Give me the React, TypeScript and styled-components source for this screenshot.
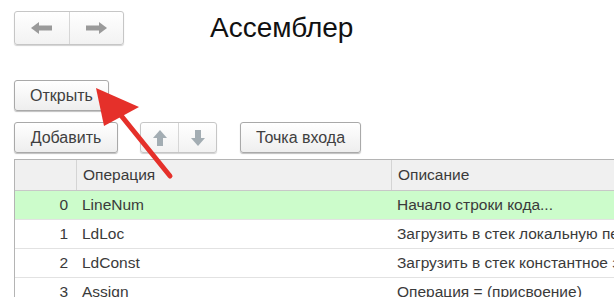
import styled, { createGlobalStyle } from "styled-components";

const GlobalStyle = createGlobalStyle`
    html, body {
        margin: 0;
        padding: 0;
        background: #ffffff;
    }
    body {
        font-family: "Liberation Sans", Arial, sans-serif;
        color: #3c3c3c;
    }
`;

const Page = styled.div`
    position: relative;
    width: 614px;
    height: 297px;
    overflow: hidden;
    padding: 11px 0 0 14px;
    box-sizing: border-box;
`;

const TopBar = styled.div`
    display: flex;
    align-items: center;
    height: 34px;
`;

const ButtonGroup = styled.div<{ $width: number; $height?: number; $gap?: number }>`
    display: flex;
    width: ${(p) => p.$width}px;
    height: ${(p) => p.$height ?? 31}px;
    margin-left: ${(p) => p.$gap ?? 0}px;
    box-sizing: border-box;
    border: 1px solid #c6c6c6;
    border-radius: 3px;
    background: linear-gradient(#ffffff, #f2f2f2);
    box-shadow: 0 1px 1px rgba(0, 0, 0, 0.18);
    flex-shrink: 0;
`;

const GroupCell = styled.div`
    flex: 1;
    display: flex;
    align-items: center;
    justify-content: center;
    & + & {
        border-left: 1px solid #d6d6d6;
    }
`;

const Title = styled.h1`
    margin: 0 0 0 86px;
    font-size: 28px;
    font-weight: normal;
    color: #111111;
`;

const Row = styled.div<{ $top: number }>`
    display: flex;
    align-items: center;
    margin-top: ${(p) => p.$top}px;
`;

const Button = styled.button<{ $width: number; $gap?: number }>`
    width: ${(p) => p.$width}px;
    height: 31px;
    margin-left: ${(p) => p.$gap ?? 0}px;
    padding: 0;
    box-sizing: border-box;
    border: 1px solid #a9a9a9;
    border-radius: 3px;
    background: linear-gradient(#ffffff, #eeeeee);
    box-shadow: 0 1px 1px rgba(0, 0, 0, 0.25);
    font-family: "Liberation Sans", Arial, sans-serif;
    font-size: 16px;
    color: #404040;
    flex-shrink: 0;
`;

const Table = styled.div`
    margin-top: 6px;
    width: 720px;
    border-top: 1px solid #b4b4b4;
    border-left: 1px solid #b4b4b4;
`;

const TableRow = styled.div<{ $head?: boolean; $active?: boolean }>`
    display: grid;
    grid-template-columns: 61px 315px 344px;
    height: ${(p) => (p.$head ? 31 : 29)}px;
    background: ${(p) => (p.$head ? "#f0f0f0" : p.$active ? "#ccfccb" : "#ffffff")};
    border-bottom: 1px solid ${(p) => (p.$head ? "#c8c8c8" : "#e2e2e2")};
    box-sizing: border-box;
    font-size: 15.5px;
    color: #3a3a3a;
`;

const Cell = styled.div<{ $head?: boolean; $num?: boolean }>`
    display: flex;
    align-items: center;
    justify-content: ${(p) => (p.$num ? "flex-end" : "flex-start")};
    padding: ${(p) => (p.$num ? "0 8px 0 0" : "0 0 0 6px")};
    white-space: nowrap;
    overflow: hidden;
    border-left: ${(p) => (p.$head ? "1px solid #d4d4d4" : "none")};
    &:first-child {
        border-left: none;
    }
`;

const Overlay = styled.svg`
    position: absolute;
    left: 0;
    top: 0;
    pointer-events: none;
`;

const HArrow = ({ dir }: { dir: "left" | "right" }) => (
    <svg width="22" height="12" viewBox="0 0 22 12">
        <g fill="#9a9a9a" transform={dir === "right" ? "translate(22 0) scale(-1 1)" : undefined}>
            <polygon points="0,6 8,0 8,12" />
            <rect x="7" y="3.5" width="14" height="5" />
        </g>
    </svg>
);

const VArrow = ({ dir }: { dir: "up" | "down" }) => (
    <svg width="14" height="16" viewBox="0 0 14 16">
        <g fill="#a3adb3" transform={dir === "down" ? "translate(0 16) scale(1 -1)" : undefined}>
            <polygon points="7,0 14,8 0,8" />
            <rect x="4" y="7" width="6" height="9" />
        </g>
    </svg>
);

const rows = [
    { n: 0, op: "LineNum", desc: "Начало строки кода..." },
    { n: 1, op: "LdLoc", desc: "Загрузить в стек локальную переменную" },
    { n: 2, op: "LdConst", desc: "Загрузить в стек константное значение" },
    { n: 3, op: "Assign", desc: "Операция = (присвоение)" },
];

const App = () => {
    return (
        <Page>
            <GlobalStyle />
            <TopBar>
                <ButtonGroup $width={110} $height={34}>
                    <GroupCell>
                        <HArrow dir="left" />
                    </GroupCell>
                    <GroupCell>
                        <HArrow dir="right" />
                    </GroupCell>
                </ButtonGroup>
                <Title>Ассемблер</Title>
            </TopBar>
            <Row $top={35}>
                <Button $width={95}>Открыть</Button>
            </Row>
            <Row $top={11}>
                <Button $width={104}>Добавить</Button>
                <ButtonGroup $width={77} $gap={22}>
                    <GroupCell>
                        <VArrow dir="up" />
                    </GroupCell>
                    <GroupCell>
                        <VArrow dir="down" />
                    </GroupCell>
                </ButtonGroup>
                <Button $width={121} $gap={23}>
                    Точка входа
                </Button>
            </Row>
            <Table>
                <TableRow $head>
                    <Cell $head />
                    <Cell $head>Операция</Cell>
                    <Cell $head>Описание</Cell>
                </TableRow>
                {rows.map((r, i) => (
                    <TableRow key={r.n} $active={i === 0}>
                        <Cell $num>{r.n}</Cell>
                        <Cell>{r.op}</Cell>
                        <Cell>{r.desc}</Cell>
                    </TableRow>
                ))}
            </Table>
            <Overlay width="614" height="297" viewBox="0 0 614 297">
                <line x1="170" y1="176" x2="115" y2="108" stroke="#e5302a" strokeWidth="5" strokeLinecap="round" />
                <polygon points="96,88 139,107 104,126" fill="#e5302a" />
            </Overlay>
        </Page>
    );
};

export default App;
